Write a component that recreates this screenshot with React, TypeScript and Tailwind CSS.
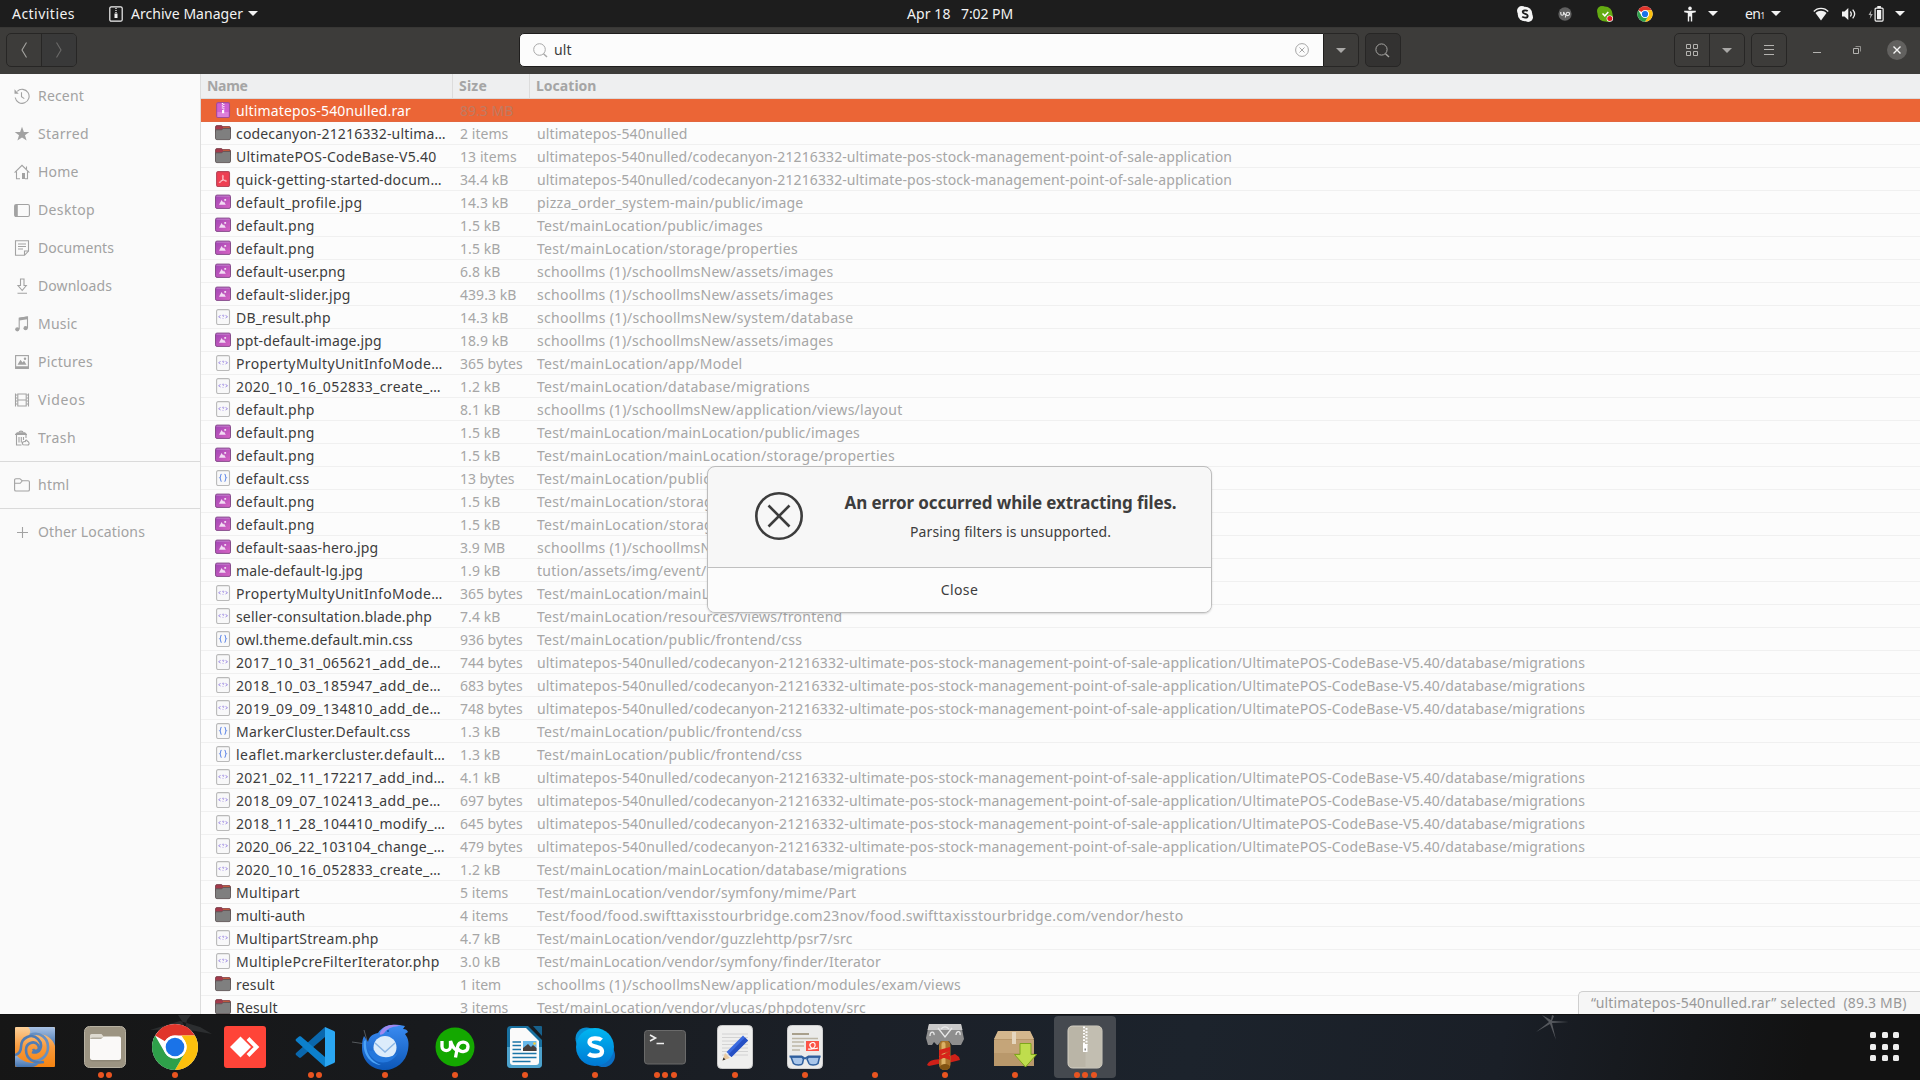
import React, { useLayoutEffect, useRef } from "react";

/** Text run whose tracking is adjusted so that it fills the given width. */
function Fit({ t, w, className = "" }: { t: string; w: number; className?: string }) {
  const ref = useRef<HTMLSpanElement>(null);
  useLayoutEffect(() => {
    const el = ref.current;
    if (!el) return;
    el.style.letterSpacing = "0px";
    const natural = el.getBoundingClientRect().width;
    el.style.letterSpacing = `${(w - natural) / t.length}px`;
  }, [t, w]);
  return (
    <span ref={ref} className={"inline-block shrink-0 whitespace-pre " + className}>
      {t}
    </span>
  );
}

type Kind = "rar" | "dir" | "pdf" | "img" | "php" | "css";
type Row = [Kind, string, number, string, string, number];

const APP = "ultimatepos-540nulled/codecanyon-21216332-ultimate-pos-stock-management-point-of-sale-application";
const MIG = APP + "/UltimatePOS-CodeBase-V5.40/database/migrations";
const ASSETS = "schoollms (1)/schoollmsNew/assets/images";
const FCSS = "Test/mainLocation/public/frontend/css";
const STORE = "Test/mainLocation/storage/properties";

const rows: Row[] = [
  ["rar", "ultimatepos-540nulled.rar", 175, "89.3 MB", "", 0],
  ["dir", "codecanyon-21216332-ultima…", 209.7, "2 items", "ultimatepos-540nulled", 150.5],
  ["dir", "UltimatePOS-CodeBase-V5.40", 200.5, "13 items", APP, 695],
  ["pdf", "quick-getting-started-docum…", 205.7, "34.4 kB", APP, 695],
  ["img", "default_profile.jpg", 126.5, "14.3 kB", "pizza_order_system-main/public/image", 266.5],
  ["img", "default.png", 78.6, "1.5 kB", "Test/mainLocation/public/images", 226],
  ["img", "default.png", 78.6, "1.5 kB", STORE, 261],
  ["img", "default-user.png", 109.6, "6.8 kB", ASSETS, 296.5],
  ["img", "default-slider.jpg", 114.7, "439.3 kB", ASSETS, 296.5],
  ["php", "DB_result.php", 94.7, "14.3 kB", "schoollms (1)/schoollmsNew/system/database", 316.5],
  ["img", "ppt-default-image.jpg", 145.6, "18.9 kB", ASSETS, 296.5],
  ["php", "PropertyMultyUnitInfoMode…", 206.7, "365 bytes", "Test/mainLocation/app/Model", 205.5],
  ["php", "2020_10_16_052833_create_…", 205, "1.2 kB", "Test/mainLocation/database/migrations", 273],
  ["php", "default.php", 78.6, "8.1 kB", "schoollms (1)/schoollmsNew/application/views/layout", 365.5],
  ["img", "default.png", 78.6, "1.5 kB", "Test/mainLocation/mainLocation/public/images", 323],
  ["img", "default.png", 78.6, "1.5 kB", "Test/mainLocation/mainLocation/storage/properties", 358],
  ["css", "default.css", 73.6, "13 bytes", FCSS, 265.3],
  ["img", "default.png", 78.6, "1.5 kB", STORE, 261],
  ["img", "default.png", 78.6, "1.5 kB", STORE, 261],
  ["img", "default-saas-hero.jpg", 142.3, "3.9 MB", ASSETS, 296.5],
  ["img", "male-default-lg.jpg", 127, "1.9 kB", "tution/assets/img/event/", 169.5],
  ["php", "PropertyMultyUnitInfoMode…", 206.7, "365 bytes", "Test/mainLocation/mainLocation/app/Model", 302],
  ["php", "seller-consultation.blade.php", 196, "7.4 kB", "Test/mainLocation/resources/views/frontend", 305.5],
  ["css", "owl.theme.default.min.css", 177, "936 bytes", FCSS, 265.3],
  ["php", "2017_10_31_065621_add_de…", 205, "744 bytes", MIG, 1048],
  ["php", "2018_10_03_185947_add_de…", 205, "683 bytes", MIG, 1048],
  ["php", "2019_09_09_134810_add_de…", 205, "748 bytes", MIG, 1048],
  ["css", "MarkerCluster.Default.css", 174.5, "1.3 kB", FCSS, 265.3],
  ["css", "leaflet.markercluster.default…", 209.3, "1.3 kB", FCSS, 265.3],
  ["php", "2021_02_11_172217_add_ind…", 209, "4.1 kB", MIG, 1048],
  ["php", "2018_09_07_102413_add_pe…", 204.7, "697 bytes", MIG, 1048],
  ["php", "2018_11_28_104410_modify_…", 209.3, "645 bytes", MIG, 1048],
  ["php", "2020_06_22_103104_change_…", 208.7, "479 bytes", MIG, 1048],
  ["php", "2020_10_16_052833_create_…", 205, "1.2 kB", "Test/mainLocation/mainLocation/database/migrations", 370],
  ["dir", "Multipart", 64, "5 items", "Test/mainLocation/vendor/symfony/mime/Part", 319.3],
  ["dir", "multi-auth", 69.3, "4 items", "Test/food/food.swifttaxisstourbridge.com23nov/food.swifttaxisstourbridge.com/vendor/hesto", 646.5],
  ["php", "MultipartStream.php", 142.7, "4.7 kB", "Test/mainLocation/vendor/guzzlehttp/psr7/src", 315.6],
  ["php", "MultiplePcreFilterIterator.php", 203.7, "3.0 kB", "Test/mainLocation/vendor/symfony/finder/Iterator", 344],
  ["dir", "result", 38.7, "1 item", "schoollms (1)/schoollmsNew/application/modules/exam/views", 424],
  ["dir", "Result", 41.7, "3 items", "Test/mainLocation/vendor/vlucas/phpdotenv/src", 329],
];

function sizeWidth(s: string) {
  if (s === "89.3 MB") return 53.4;
  if (s === "439.3 kB") return 56.4;
  if (s === "3.9 MB") return 45.2;
  if (s === "13 bytes") return 54.5;
  if (s === "13 items") return 56.7;
  if (s === "1 item") return 41.2;
  if (s.endsWith("bytes")) return 62.7;
  if (s.endsWith("items")) return 48.3;
  return s.length === 7 ? 48.3 : 40.4;
}

function FileIcon({ k }: { k: Kind }) {
  const base = "block h-4 w-4 shrink-0";
  if (k === "dir")
    return (
      <svg className={base} viewBox="0 0 16 16">
        <path d="M.5 3V2A1.5 1.5 0 0 1 2 .6h4.5l1.3 1H14A1.5 1.5 0 0 1 15.5 3v4H.5z" fill="#a33a4b" stroke="#6e3a42" strokeWidth=".8" />
        <path d="M8 1.8h6.2l.8 1.4H8z" fill="#c75a3c" />
        <path d="M.5 4.8h6.3L8.2 3.4h7.3v9.8a1.4 1.4 0 0 1-1.4 1.4H1.9A1.4 1.4 0 0 1 .5 13.2z" fill="#7f7f7f" stroke="#5d5556" strokeWidth=".9" />
      </svg>
    );
  if (k === "img")
    return (
      <svg className={base} viewBox="0 0 16 16">
        <defs>
          <linearGradient id="imgG" x1="0" y1="0" x2="1" y2="1">
            <stop offset="0" stopColor="#9f45b5" />
            <stop offset="1" stopColor="#d964c4" />
          </linearGradient>
        </defs>
        <rect x=".5" y="1.1" width="15" height="13.3" rx="1.5" fill="url(#imgG)" stroke="#874f8c" strokeWidth="1" />
        <path d="M1.5 2.2h13" stroke="#c58bd0" strokeWidth=".8" />
        <path d="M4 10.7 6.6 6l1.6 2.6.8-1 1.8 3.1z" fill="#f2dcf3" />
        <rect x="9.3" y="5" width="1.8" height="1.8" fill="#f2dcf3" />
      </svg>
    );
  const paper = k === "php" || k === "css";
  return (
    <svg className={base} viewBox="0 0 16 16">
      <rect
        x="1.6" y=".6" width="12.9" height="14.9" rx="1.5"
        fill={paper ? "#f8f8f9" : k === "pdf" ? "#ee3e52" : "#d05fd0"}
        stroke={paper ? "#b9b9b9" : k === "pdf" ? "#b5475a" : "#a34d96"}
        strokeWidth="1.1"
      />
      {k === "rar" && (
        <>
          <path d="M2.5 10h11v5h-11z" fill="#dc80d9" />
          <path d="M7.4 1v6.5M8.8 1.8v6" stroke="#fff" strokeWidth="1.2" strokeDasharray="1.2 1" />
          <path d="M7 8h2.2v3.2H7z" fill="#fff" />
        </>
      )}
      {k === "pdf" && (
        <path d="M7.8 4.2c.9 0 .5 2 .2 3C7.2 9.7 5.3 12 4.4 11.6c-.8-.7 2.1-2.1 4-2.3 1.4-.2 3.2.1 3.1.8-.2.9-2.9-.6-3.6-2.5-.5-1.300-.8-3.300-.1-3.400z" fill="none" stroke="#fbd5d9" strokeWidth=".8" />
      )}
      {k === "php" && (
        <path d="M5.6 6.4 3.6 7.7l2 1.3M10.500 6.400l2 1.300-2 1.300M7.200 6.600c.3-.7 1.900-.6 1.700.3-.1.6-.9.600-.9 1.200M8 9.100v.7" fill="none" stroke="#a593e6" strokeWidth="1" />
      )}
      {k === "css" && (
        <path d="M6.7 4.2c-1.800 0-.7 2.700-1.500 3.300l-.5.3.5.3c.8.600-.3 3.300 1.500 3.300M9.400 4.200c1.800 0 .7 2.700 1.500 3.300l.5.3-.5.3c-.8.600.3 3.300-1.500 3.300" fill="none" stroke="#6a8fe8" strokeWidth="1.1" />
      )}
    </svg>
  );
}

function Caret({ className = "" }: { className?: string }) {
  return (
    <svg className={"block h-[5px] w-[10px] shrink-0 " + className} viewBox="0 0 10 5">
      <path d="M0 0h10L5 5z" fill="currentColor" />
    </svg>
  );
}

function ChromeLogo({ className }: { className: string }) {
  return (
    <svg className={className} viewBox="0 0 48 48">
      <circle cx="24" cy="24" r="23" fill="#fff" />
      <path d="M24 1a23 23 0 0 1 19.9 11.5H24A11.5 11.5 0 0 0 14 18.2L4.1 12.5A23 23 0 0 1 24 1z" fill="#e0352b" />
      <path d="M4.1 12.5 14 29.8a11.5 11.5 0 0 0 10 5.7L24 47A23 23 0 0 1 4.1 12.5z" fill="#2ea04a" />
      <path d="M24 47l10-17.2a11.5 11.5 0 0 0 0-11.6L30.5 12.5H43.9A23 23 0 0 1 24 47z" fill="#fcc00d" />
      <path d="M24 47l10-17.2a11.5 11.5 0 0 1-10 5.7 11.5 11.5 0 0 1-10-5.7L15 31.5 24 40z" fill="#2ea04a" />
      <circle cx="24" cy="24" r="11.5" fill="#fff" />
      <circle cx="24" cy="24" r="9.3" fill="#1a73e8" />
    </svg>
  );
}

const sideIcons: Record<string, React.ReactNode> = {
  Recent: (
    <>
      <path d="M3.2 3.3A7 7 0 1 1 1.2 9.5" />
      <path d="M7.5 4.3v4.5l2.8 1.8" />
      <path d="M.5 1.3v4.4h4.2z" fill="currentColor" stroke="none" />
    </>
  ),
  Starred: <path d="M8 .8 9.9 6H15.3l-4.3 3.3 1.6 5.3L8 11.4l-4.6 3.2L5 9.3.7 6h5.4z" fill="currentColor" stroke="none" />,
  Home: (
    <>
      <path d="M.6 8.7 8 1.3l7.4 7.4M2.5 7.5v7.2h3.5M11 14.7h2.5V7.5M12.5 2.5v2.5" />
      <path d="M8 9h3v6H8z" fill="currentColor" stroke="none" />
    </>
  ),
  Desktop: (
    <>
      <rect x=".6" y="2.5" width="14.8" height="12" rx="1.5" />
      <path d="M1 3h2.800v11H1z" fill="currentColor" stroke="none" />
    </>
  ),
  Documents: (
    <>
      <path d="M1.5.7h13V11l-4 4.3h-9z" />
      <path d="M4 4h8M4 6.5h8M4 9h5M10.5 15v-4h4" />
    </>
  ),
  Downloads: <path d="M6.5 1h3.5v6.5h2.3L8.2 12.5 4 7.5h2.5zM3.5 15.3h9.5" />,
  Music: (
    <>
      <path d="M5.2 13V2.2l8.300-1.200v11" />
      <path d="M5.2 1.800 13.5.6v2.600l-8.300 1.200z" fill="currentColor" stroke="none" />
      <circle cx="3.3" cy="13.3" r="2.1" fill="currentColor" stroke="none" />
      <circle cx="11.6" cy="12.2" r="2.1" fill="currentColor" stroke="none" />
    </>
  ),
  Pictures: (
    <>
      <rect x="1.6" y="1.6" width="12.8" height="12.8" />
      <path d="M1.6 12.2h12.800v2.200H1.600zM3.500 10.800l3-5 2 2.800 1.500-1.800 2.500 4z" fill="currentColor" stroke="none" />
      <circle cx="11" cy="4.8" r="1.2" fill="currentColor" stroke="none" />
    </>
  ),
  Videos: (
    <>
      <path d="M1.5 1.5v13M3.8 1.5v13M12.2 1.5v13M14.5 1.5v13M3.8 2h8.4M3.8 8h8.4M3.8 14h8.4" />
      <path d="M1.5 3h2M1.5 6h2M1.5 9h2M1.5 12h2M12.5 3h2M12.5 6h2M12.5 9h2M12.5 12h2" />
    </>
  ),
  Trash: (
    <>
      <path d="M5 2.5c0-1.800 4-1.800 4 0" />
      <path d="M1 4.2 3 2.3h8l2 1.900v.9H1z" fill="currentColor" stroke="none" />
      <path d="M2.5 5v10h5M5 7v5.500M7.300 7v5.500M9.500 7v3M12 5v3" />
      <path d="M9 14.8c-2-2.800 1-3.500 2.300-3.300 0-1.500 1.800-2 2-.2 2 .2 2.500 3.500.5 3.700z" />
    </>
  ),
  html: <path d="M.6 12.7V3A1.3 1.3 0 0 1 1.9 1.7h4l2.200 2h6A1.3 1.3 0 0 1 15.4 5v7.700a1.3 1.3 0 0 1-1.300 1.300H1.900A1.3 1.3 0 0 1 .6 12.700zM.6 6.300h5.600L8.200 4" />,
  "Other Locations": <path d="M8.500 3v11M3 8.500h11" />,
};

function SideItem({ t, w }: { t: string; w: number }) {
  return (
    <div className="flex h-[38px] shrink-0 items-center pl-[14px] text-[#a2a2a2]">
      <svg className="mr-2 block h-4 w-4" viewBox="0 0 16 16" fill="none" stroke="currentColor" strokeWidth="1.1">
        {sideIcons[t]}
      </svg>
      <Fit t={t} w={w} className="text-[14px]" />
    </div>
  );
}

const dockIcons: { icon: React.ReactNode; dots: number; active?: boolean }[] = [
  {
    dots: 0,
    icon: (
      <svg className="h-10 w-10" viewBox="0 0 40 40">
        <defs>
          <linearGradient id="sw" x1="0" y1="0" x2="0" y2="1">
            <stop offset="0" stopColor="#fbd09a" />
            <stop offset=".5" stopColor="#f89a3c" />
            <stop offset="1" stopColor="#f68411" />
          </linearGradient>
          <linearGradient id="swb" x1="0" y1="0" x2="0" y2="1">
            <stop offset="0" stopColor="#a9c3e6" />
            <stop offset="1" stopColor="#4474b0" />
          </linearGradient>
        </defs>
        <rect width="40" height="40" rx="1" fill="url(#sw)" />
        <path d="M13 0h25a2 2 0 0 1 2 2v17C37 9 26 4 13 9c4-3 2-7 0-9z" fill="url(#swb)" />
        <path d="M0 26c5 8 15 12 25 9-2 3-5 5-9 5H2a2 2 0 0 1-2-2z" fill="url(#swb)" />
        <path d="M15 8c10-4 18 3 18 12 0 8-6 14-14 14" fill="none" stroke="#6690c3" strokeWidth="2.6" />
        <path d="M0 28c4-1 6-3 6-8C6 10 17 6 23 12s2 16-6 13" fill="none" stroke="#4f7cb5" strokeWidth="2.600" />
        <path d="M29 35c-10 2-18-3-18-12 0-7 8-10 12-5 3 5-3 8-5 4" fill="none" stroke="#4f7cb5" strokeWidth="2.600" />
      </svg>
    ),
  },
  {
    dots: 2,
    icon: (
      <svg className="h-[42px] w-[42px]" viewBox="0 0 42 42">
        <rect x=".5" y=".5" width="41" height="41" rx="5" fill="#9c9482" stroke="#b7b1a2" />
        <path d="M6 11V9.500A1.500 1.500 0 0 1 7.500 8h10l2.500 3h14v5H6z" fill="#dedad0" />
        <rect x="6" y="11.5" width="31" height="24" rx="2.5" fill="#7d7666" opacity=".45" />
        <path d="M6 13h11l3-2.500h15a2 2 0 0 1 2 2V32a2 2 0 0 1-2 2H8a2 2 0 0 1-2-2z" fill="#faf9f8" />
      </svg>
    ),
  },
  { dots: 1, icon: <ChromeLogo className="h-12 w-12" /> },
  {
    dots: 0,
    icon: (
      <svg className="h-[42px] w-[42px]" viewBox="0 0 42 42">
        <rect width="42" height="42" rx="3" fill="#ff4438" />
        <path d="M6 21 16.500 10.500 27 21 16.500 31.500z" fill="#fff" />
        <path d="m24 12.500 8.500 8.500-8.500 8.500" fill="none" stroke="#fff" strokeWidth="4" />
      </svg>
    ),
  },
  {
    dots: 2,
    icon: (
      <svg className="h-10 w-10" viewBox="0 0 40 40">
        <path d="M30 0 1 26a1.500 1.500 0 0 0 0 2l3 2.500c.6.500 1.300.5 2 0L30 10z" fill="#0a67ad" />
        <path d="M30 40 1 14a1.500 1.500 0 0 1 0-2L4 9.500c.6-.5 1.300-.5 2 0L30 30z" fill="#0c80cc" />
        <path d="M30 0l9 4a2 2 0 0 1 1 2v28a2 2 0 0 1-1 2l-9 4z" fill="#2aa6f2" />
      </svg>
    ),
  },
  {
    dots: 1,
    icon: (
      <svg className="h-12 w-12" viewBox="0 0 48 48">
        <defs>
          <linearGradient id="tb" x1="0" y1="0" x2="0" y2="1">
            <stop offset="0" stopColor="#3b8cf2" />
            <stop offset="1" stopColor="#0c57b8" />
          </linearGradient>
        </defs>
        <path d="M17 10C22 2 31 0 44 3l-2 3c3 0 4 1 5 3l-3 2c4 5 4 10 3 16-2 12-12 20-23 20C10 47 1 37 1 25c0-4 0-8 2-12l4 6c1-5 4-8 10-9z" fill="url(#tb)" />
        <path d="M19 10C22 2 31 0 40 3c-7 0-13 2-16 6-2 3-6 4-5 1z" fill="#a088ee" />
        <path d="M5 17c-1 12 4 21 15 25-12-1-19-13-17-24z" fill="#4ca4f8" />
        <circle cx="24" cy="24.500" r="11.500" fill="#dcecfb" />
        <path d="m14 20 10 9 10-9" fill="none" stroke="#8bb6e4" strokeWidth="1.500" />
        <path d="M7 27c4 15 22 17 30 3-8 6-20 6-24-3-2 1-4 1-6 0z" fill="#2478dd" />
        <circle cx="27" cy="8" r="1" fill="#0a4fa8" />
      </svg>
    ),
  },
  {
    dots: 1,
    icon: (
      <svg className="h-10 w-10" viewBox="0 0 40 40">
        <circle cx="20" cy="20" r="19.5" fill="#14a800" />
        <path d="M7 14v5.500c0 5.500 8.500 5.500 8.500 0V14c1.500 5 4 9 8 10" fill="none" stroke="#fff" strokeWidth="3.3" />
        <path d="M20.500 30.500 22.500 20c1.500-7 10.500-6 10.500-.5s-7 7-10.500 2" fill="none" stroke="#fff" strokeWidth="3.3" />
      </svg>
    ),
  },
  {
    dots: 1,
    icon: (
      <svg className="h-[44px] w-[36px]" viewBox="0 0 36 44">
        <path d="M4 1h17l14 14v24a4 4 0 0 1-4 4H4a4 4 0 0 1-4-4V5a4 4 0 0 1 4-4z" fill="#18709f" />
        <path d="M26 1h8a1 1 0 0 1 1 1v9z" fill="#17618c" />
        <path d="M0 22h35v17a4 4 0 0 1-4 4H4a4 4 0 0 1-4-4z" fill="#4da2cc" />
        <path d="M5 3h14l13 13v21a3 3 0 0 1-3 3H6a3 3 0 0 1-3-3V5a2 2 0 0 1 2-2z" fill="#fafafa" />
        <path d="M5.500 17H14M5.500 20.500H14M5.500 24.500H14M5.500 28.500h24M5.500 32.500h24M5.500 36.500h18" stroke="#1b75a8" strokeWidth="1.7" />
        <rect x="16" y="16" width="13.5" height="10" fill="#66b8ea" />
        <path d="M16 26v-3l5-4 3 3 2-2 3.500 3v3z" fill="#463e3b" />
        <circle cx="27.5" cy="18.5" r="1.3" fill="#f5cb35" />
      </svg>
    ),
  },
  {
    dots: 1,
    icon: (
      <svg className="h-10 w-10" viewBox="0 0 40 40">
        <defs>
          <linearGradient id="sk" x1="0" y1="0" x2="0" y2="1">
            <stop offset="0" stopColor="#00b7f1" />
            <stop offset="1" stopColor="#0078d4" />
          </linearGradient>
        </defs>
        <circle cx="11.5" cy="11.5" r="11" fill="#0791d6" />
        <circle cx="28.5" cy="28.5" r="11.5" fill="#0b6fc4" />
        <circle cx="20" cy="20" r="19" fill="url(#sk)" />
        <path d="M26.500 13c-2.500-2.200-12-3-12 2.200 0 5.800 12.500 2.800 12.500 9.300 0 5.500-10.500 5-13.500 2.200" fill="none" stroke="#fff" strokeWidth="4.3" />
      </svg>
    ),
  },
  {
    dots: 3,
    icon: (
      <svg className="h-[42px] w-[42px]" viewBox="0 0 42 42">
        <rect x=".5" y="4.5" width="41" height="33.5" rx="3" fill="#4d4d4d" stroke="#6a6a6a" />
        <path d="m6 9 5.500 3L6 15M12.500 17.500H20" fill="none" stroke="#efefef" strokeWidth="1.6" />
      </svg>
    ),
  },
  {
    dots: 1,
    icon: (
      <svg className="h-[44px] w-[36px]" viewBox="0 0 36 44">
        <rect x=".5" y=".5" width="35" height="43" rx="4" fill="#efefee" stroke="#c9c9c9" />
        <path d="M5 9h26M5 12.500h26M5 16h26M5 19.500h26M5 23h26M5 26.500h26M5 30h26" stroke="#cfcfcf" strokeWidth=".9" />
        <path d="M5.500 35.500 8 28l5 5z" fill="#e8c9a0" />
        <path d="m5.500 35.500 1-3 2 2z" fill="#333" />
        <path d="M9.500 27 26 10.500l5 5L14.500 32z" fill="#3a6ae0" />
        <path d="m11.500 29.500 16.500-17 3 3L14.500 32z" fill="#2650c4" />
      </svg>
    ),
  },
  {
    dots: 1,
    icon: (
      <svg className="h-[44px] w-[36px]" viewBox="0 0 36 44">
        <rect x=".5" y=".5" width="35" height="43" rx="4" fill="#ebebea" stroke="#cfcfcf" />
        <path d="M5 9h17" stroke="#a9a08c" strokeWidth="2" />
        <path d="M5 13.500h26M5 17h12M5 21h12M5 25h8" stroke="#bdb6a6" strokeWidth="1.6" />
        <rect x="19" y="16" width="13" height="10" fill="#fb5246" />
        <path d="M21 24c5 1 8-2 7-5s-6-1-5 2 5 3 8 2" fill="none" stroke="#fff" strokeWidth="1.2" />
        <path d="M4 32h11l1.500 2-1 4.500c-1 2-7 2-9 0zM20 34l1.500-2h11L31 38.500c-2 2-8 2-9 0z" fill="#a9c6ea" stroke="#2f5f9e" strokeWidth="1.5" />
        <path d="M2.500 31.500h12l3.500 2 3.500-2h12" fill="none" stroke="#2f5f9e" strokeWidth="1.8" />
      </svg>
    ),
  },
  { dots: 1, icon: null },
  {
    dots: 1,
    icon: (
      <svg className="h-[46px] w-10" viewBox="0 0 40 46">
        <path d="M2 41c3-6 7-5 14-6l2 4-14 3zM22 33l8-3 4 3 1 3-12 3z" fill="#cf2018" />
        <rect x="14" y="16" width="11.5" height="30" rx="5.5" fill="#a9742c" />
        <rect x="16.5" y="18" width="4" height="26" rx="2" fill="#ddb165" />
        <ellipse cx="20" cy="43" rx="5" ry="3" fill="#815312" />
        <path d="m14 26 11-3v4l-11 4zM14 33l11-6v4l-11 5zM14 30l11 2v4l-11-4z" fill="#d8231a" />
        <path d="M4 0h32l3 15-3 6h-9l-3-4h-8l-3 4h-1l-3-3-2 3H3l-2-7z" fill="#8e8e8e" />
        <path d="M4 0h32l1.500 6H2.500z" fill="#c9c9c9" />
        <path d="m13 4 7 9 7-9M16 5c3-3 5-3 8 0M5 12c0-6 5-4 4-1M31 11c0-4 5-5 4 0" fill="none" stroke="#e8e8e8" strokeWidth="1.3" />
      </svg>
    ),
  },
  {
    dots: 1,
    icon: (
      <svg className="h-10 w-[44px]" viewBox="0 0 44 40">
        <path d="M5 4h32l4 9v26H1V13z" fill="#b9986b" />
        <path d="M5 4h32l4 8H1z" fill="#d4b78d" />
        <path d="M1 13h40v13H1z" fill="#c5a579" />
        <path d="M19 5h4v12h-4z" fill="#e5d6be" />
        <path d="M27 16.500h11v11h5.500L32.500 40 21.500 27.500H27z" fill="#bfdd4d" stroke="#7fa61c" />
      </svg>
    ),
  },
  {
    dots: 3,
    active: true,
    icon: (
      <svg className="h-[44px] w-[36px]" viewBox="0 0 36 44">
        <rect x="1" y="1" width="34" height="42" rx="4.5" fill="#bab5a7" stroke="#d4d0c4" />
        <path d="M18.500 1.500H30a4.500 4.500 0 0 1 4.500 4.500v32a4.500 4.500 0 0 1-4.500 4.500H18.500z" fill="#c2beb1" />
        <path d="M17 1.500v18M19.500 3v17" stroke="#fff" strokeWidth="2" strokeDasharray="1.7 1.5" />
        <path d="M16 19h4.500v8H16z" fill="#fff" />
        <path d="M17.500 23.500h1.500v2h-1.500z" fill="#888" />
      </svg>
    ),
  },
];

export default function App() {
  return (
    <div className="relative flex h-[1080px] w-[1920px] flex-col overflow-hidden bg-[#fcfcfc] font-['Noto_Sans','Open_Sans',sans-serif] text-[14px] leading-[20px] text-[#3d3d3d]">
      {/* system bar */}
      <div className="flex h-[27px] shrink-0 items-center justify-between bg-[#1d1d1d] text-[#f2f2f2]">
        <div className="flex w-[600px] items-center pl-3">
          <Fit t="Activities" w={63} />
          <svg className="ml-[34px] mr-2 block h-4 w-[14px]" viewBox="0 0 14 16">
            <rect x=".8" y=".8" width="12.4" height="14.4" rx="1.5" fill="none" stroke="#f2f2f2" strokeWidth="1.2" />
            <path d="M7 2v5" stroke="#f2f2f2" strokeWidth="1.3" strokeDasharray="1 1" />
            <path d="M5.500 7.500h3V12h-3z" fill="#f2f2f2" />
          </svg>
          <Fit t="Archive Manager" w={112} />
          <Caret className="ml-[5px]" />
        </div>
        <div className="flex w-[106px] justify-between">
          <Fit t="Apr 18" w={43.5} />
          <Fit t="7:02 PM" w={52} />
        </div>
        <div className="flex w-[600px] items-center justify-end pr-[15px]">
          <div className="mr-[17px] flex">
            <div className="flex w-10 justify-center">
              <svg className="h-4 w-4" viewBox="0 0 16 16">
                <circle cx="4.8" cy="4.8" r="4.8" fill="#f5f5f5" />
                <circle cx="11.2" cy="11.2" r="4.8" fill="#f5f5f5" />
                <circle cx="8" cy="8" r="7.3" fill="#f5f5f5" />
                <path d="M10.700 5.200c-1.100-1-5-1.200-5 .9 0 2.400 5 1.200 5 3.800 0 2.300-4.200 2-5.500.8" fill="none" stroke="#1d1d1d" strokeWidth="1.8" />
              </svg>
            </div>
            <div className="flex w-10 items-center justify-center">
              <svg className="h-[14px] w-[14px]" viewBox="0 0 40 40">
                <circle cx="20" cy="20" r="19" fill="#606060" />
                <path d="M8 14v5c0 6 8 6 8 0v-5c1.500 5 4 9 8 10M21 30l2-10c1.500-7 10-6 10-.5s-7 7-10 2" fill="none" stroke="#e8e8e8" strokeWidth="3.2" />
              </svg>
            </div>
            <div className="flex w-10 justify-center">
              <svg className="h-4 w-4" viewBox="0 0 16 16">
                <circle cx="5" cy="5" r="5" fill="#64ab12" />
                <circle cx="11" cy="11" r="5" fill="#64ab12" />
                <circle cx="8" cy="8" r="7.5" fill="#64ab12" />
                <path d="m5.500 7.500 2.300 2.300 3.500-3.800" fill="none" stroke="#fff" strokeWidth="1.5" />
                <circle cx="12.8" cy="12.6" r="3.2" fill="#fff" />
                <circle cx="12.8" cy="12.6" r="2.5" fill="#e01b24" />
              </svg>
            </div>
            <div className="flex w-10 justify-center">
              <ChromeLogo className="h-4 w-4" />
            </div>
          </div>
          <svg className="mr-[10px] h-4 w-4" viewBox="0 0 16 16">
            <circle cx="8" cy="2.4" r="1.8" fill="#f2f2f2" />
            <path d="M2.200 4.800h11.600v1.400l-3.600.7V15.500H8.800V10.500H7.200v5H5.800V6.900l-3.600-.7z" fill="#f2f2f2" />
          </svg>
          <Caret />
          <div className="ml-[27px] mr-[6px] flex w-5 items-baseline">
            <Fit t="en" w={15.5} />
            <span className="text-[8px] leading-none">1</span>
          </div>
          <Caret />
          <svg className="ml-8 h-4 w-4" viewBox="0 0 16 16">
            <path d="M.8 5.500C4.500 1.200 11.500 1.200 15.200 5.500" fill="none" stroke="#f2f2f2" strokeWidth="1.3" />
            <path d="M2.500 7C5.500 4 10.500 4 13.500 7L8 14.500z" fill="#f2f2f2" />
          </svg>
          <svg className="ml-3 h-4 w-4" viewBox="0 0 16 16">
            <path d="M1 5.500h2.500L7.300 2v12L3.500 10.500H1z" fill="#f2f2f2" />
            <path d="M9.300 5.500c1.200 1.500 1.200 3.500 0 5M11.700 3.600c2.300 2.600 2.300 6.200 0 8.800" fill="none" stroke="#f2f2f2" strokeWidth="1.3" />
          </svg>
          <svg className="ml-[11px] h-4 w-4" viewBox="0 0 16 16">
            <path d="m3.500 4-3 5h2l-.7 4 3-5h-2z" fill="#aaa" />
            <rect x="7.1" y="2.1" width="8" height="13" rx="1" fill="none" stroke="#f2f2f2" strokeWidth="1.2" />
            <path d="M9.300 0h3.600v2H9.300zM9 4h4.200v9.300H9z" fill="#f2f2f2" />
          </svg>
          <Caret className="ml-[11px]" />
        </div>
      </div>

      {/* window header */}
      <div className="flex h-[47px] shrink-0 items-center border-t border-[#383735] bg-[#3d3c3a] px-1.5 pb-[2px] text-[#a9a8a6]">
        <div className="flex h-[34px] w-[71px] rounded-[5px] border border-[#272625]">
          <div className="flex w-[35px] items-center justify-center border-r border-[#272625]">
            <svg className="h-4 w-[6px]" viewBox="0 0 6 16" fill="none" stroke="#a5a4a1">
              <path d="M5.500.5 1 8l4.500 7.500" strokeWidth="1.1" />
            </svg>
          </div>
          <div className="flex flex-1 items-center justify-center rounded-r-[4px] bg-[#393939]">
            <svg className="h-4 w-[6px]" viewBox="0 0 6 16" fill="none" stroke="#6b6a69">
              <path d="M.5.5 5 8 .5 15.500" strokeWidth="1.1" />
            </svg>
          </div>
        </div>
        <div className="ml-[442px] flex h-[34px] w-[805px] items-center rounded-l-[5px] border border-[#1f1e1d] bg-[#fcfcfc] pl-[13px] pr-[14px]">
          <svg className="mr-[6px] h-[15px] w-[15px]" viewBox="0 0 15 15" fill="none" stroke="#a8a8a8">
            <circle cx="6.5" cy="6.5" r="5.8" />
            <path d="m10.500 10.700 3.500 3.300" strokeWidth="1.5" />
          </svg>
          <Fit t="ult" w={17.8} className="text-[#3d3d3d]" />
          <div className="flex-1" />
          <svg className="h-[14px] w-[14px]" viewBox="0 0 14 14" fill="none" stroke="#a5a5a5">
            <circle cx="7" cy="7" r="6.4" />
            <path d="m4.500 4.500 5 5M9.500 4.500l-5 5" />
          </svg>
        </div>
        <div className="flex h-[34px] w-[35px] items-center justify-center rounded-r-[5px] border border-l-0 border-[#272625]">
          <Caret />
        </div>
        <div className="ml-1.5 flex h-[34px] w-[36px] items-center justify-center rounded-[5px] border border-[#272625] bg-[#333231]">
          <svg className="-ml-px h-[15px] w-[15px]" viewBox="0 0 15 15" fill="none" stroke="#a5a4a1">
            <circle cx="6.5" cy="6.5" r="5.6" />
            <path d="m10.500 10.700 3.500 3.300" strokeWidth="1.4" />
          </svg>
        </div>
        <div className="ml-[273px] flex h-[34px] w-[71px] rounded-[5px] border border-[#272625]">
          <div className="flex w-[35px] items-center justify-center border-r border-[#272625]">
            <svg className="h-[12px] w-[12px]" viewBox="0 0 12 12" fill="none" stroke="#b4b3b0">
              <path d="M.5.5h4v4h-4zM7.500.5h4v4h-4zM.5 7.500h4v4h-4zM7.500 7.500h4v4h-4z" />
            </svg>
          </div>
          <div className="flex flex-1 items-center justify-center">
            <Caret />
          </div>
        </div>
        <div className="ml-1.5 flex h-[34px] w-[36px] items-center justify-center rounded-[5px] border border-[#272625]">
          <svg className="h-[10px] w-[10px]" viewBox="0 0 10 10" stroke="#b4b3b0">
            <path d="M0 .5h10M0 4.500h10M0 9.500h10" />
          </svg>
        </div>
        <div className="ml-[26px] mt-1 h-px w-2 bg-[#b4b3b0]" />
        <svg className="ml-8 h-2 w-2" viewBox="0 0 8 8" fill="none" stroke="#b4b3b0">
          <path d="M.5 2.500h5v5h-5z" />
          <path d="M2.500.5h5v5" strokeWidth=".7" />
        </svg>
        <div className="ml-[26px] flex h-5 w-5 items-center justify-center rounded-full bg-[#62615f]">
          <svg className="h-2 w-2" viewBox="0 0 8 8" stroke="#f5f5f5" strokeWidth="1.4">
            <path d="m.5.5 7 7M7.500.5l-7 7" />
          </svg>
        </div>
      </div>

      <div className="flex h-[940px] shrink-0 overflow-hidden">
        {/* places */}
        <div className="flex w-[201px] shrink-0 flex-col border-r border-[#dcdcdc] bg-[#fafafa] pt-[3px]">
          <SideItem t="Recent" w={46} />
          <SideItem t="Starred" w={51} />
          <SideItem t="Home" w={40.5} />
          <SideItem t="Desktop" w={57} />
          <SideItem t="Documents" w={76} />
          <SideItem t="Downloads" w={74} />
          <SideItem t="Music" w={39.5} />
          <SideItem t="Pictures" w={55} />
          <SideItem t="Videos" w={47.5} />
          <SideItem t="Trash" w={38} />
          <div className="mb-1 mt-1 h-px shrink-0 bg-[#dadada]" />
          <SideItem t="html" w={31.5} />
          <div className="mb-1 mt-1 h-px shrink-0 bg-[#dadada]" />
          <SideItem t="Other Locations" w={107} />
        </div>

        {/* file list */}
        <div className="flex flex-1 flex-col overflow-hidden">
          <div className="flex h-[25px] shrink-0 items-center border-b border-[#d9dadb] bg-[#eeeff0] font-bold text-[#a5a5a5]">
            <div className="flex h-full w-[252px] items-center border-r border-[#dcdcdc] pl-[6px]">
              <Fit t="Name" w={40.5} />
            </div>
            <div className="flex h-full w-[77px] items-center border-r border-[#dcdcdc] pl-[6px]">
              <Fit t="Size" w={28} />
            </div>
            <div className="flex h-full items-center pl-[6px]">
              <Fit t="Location" w={60.5} />
            </div>
          </div>
          {rows.map(([k, name, nw, size, loc, lw], i) => (
            <div
              key={i}
              className={
                "flex h-[23px] shrink-0 items-center border-b pl-[14px] " +
                (i === 0 ? "border-[#e3673f] bg-[#eb6536]" : "border-[#f0f0f0]")
              }
            >
              <FileIcon k={k} />
              <div className={"w-[224px] shrink-0 pl-[5px] pt-[2px] " + (i === 0 ? "text-white" : "text-[#3d3d3d]")}>
                <Fit t={name} w={nw} />
              </div>
              <div className={"w-[82px] shrink-0 pl-[5px] pt-[2px] " + (i === 0 ? "text-[#c07a61]" : "text-[#a6a6a6]")}>
                <Fit t={size} w={sizeWidth(size)} />
              </div>
              <div className="pt-[2px] text-[#a6a6a6]">{loc && <Fit t={loc} w={lw} />}</div>
            </div>
          ))}
        </div>
      </div>

      {/* selection status */}
      <div className="absolute left-[1578px] top-[991px] flex h-[23px] w-[342px] items-center rounded-tl-[5px] border-l border-t border-[#cfcfcf] bg-[#f6f6f6] pl-[12px] text-[#999]">
        <Fit t={"“ultimatepos-540nulled.rar” selected  (89.3 MB)"} w={315.5} />
      </div>

      {/* dock */}
      <div className="relative flex h-[66px] shrink-0 border-t border-[#111] bg-[linear-gradient(100deg,#161616_0%,#181a1d_22%,#1b2028_45%,#1c232c_62%,#1a1f27_78%,#121212_94%)]">
        <svg className="absolute left-0 top-0 h-[66px] w-[1920px]" viewBox="0 0 1920 66">
          <path d="M178 0l4 6 3 8 2-9 4-5zM150 15l30-9 20 6 12 7-28-5z" fill="#3a3d40" opacity=".6" />
          <path d="M352 27l14 2M364 15l5 18" stroke="#55595d" />
          <path d="M1552 6l17 1-17 1 4 17-6-16-14 8 13-10-7-7 9 5 1-5 2 1z" fill="#55585d" />
        </svg>
        {dockIcons.map((d, i) => (
          <div key={i} className="relative flex w-[70px] shrink-0 justify-center pt-px">
            <div className={"flex h-[62px] w-[62px] items-center justify-center rounded-[4px] " + (d.active ? "bg-[#45494f]" : "")}>
              {d.icon}
            </div>
            <div className="absolute bottom-[2px] left-0 flex w-full justify-center gap-[2.5px]">
              {Array.from({ length: d.dots }, (_, j) => (
                <span key={j} className="h-[6px] w-[6px] rounded-full bg-[#e95420]" />
              ))}
            </div>
          </div>
        ))}
        <div className="ml-auto mr-[21px] mt-[17px] flex h-[29px] w-[29px] flex-col justify-between">
          {[0, 1, 2].map((r) => (
            <div key={r} className="flex justify-between">
              {[0, 1, 2].map((c) => (
                <span key={c} className="h-[6px] w-[6px] rounded-[1.5px] bg-[#eee]" />
              ))}
            </div>
          ))}
        </div>
      </div>

      {/* error dialog */}
      <div className="absolute left-[707px] top-[466px] flex h-[147px] w-[505px] flex-col overflow-hidden rounded-[8px] border border-[#bdbdbd] bg-[#f7f7f7] shadow-[0_1px_2px_rgba(0,0,0,0.15)]">
        <div className="flex h-[101px] shrink-0 border-b border-[#c0c0c0] pl-[47px]">
          <svg className="mt-[25px] h-12 w-12 shrink-0" viewBox="0 0 48 48" fill="none" stroke="#3d3d3d">
            <circle cx="24" cy="24" r="22.7" strokeWidth="2.6" />
            <path d="m13.500 13.500 21 21M34.500 13.500l-21 21" strokeWidth="2.6" />
          </svg>
          <div className="flex flex-1 flex-col items-center pl-[7px] pt-[24px]">
            <Fit t="An error occurred while extracting files." w={332} className="text-[17px] leading-[24px] font-bold" />
            <Fit t="Parsing filters is unsupported." w={201} className="mt-[7px] leading-[20px]" />
          </div>
        </div>
        <div className="flex flex-1 items-center justify-center bg-[#fcfcfc]">
          <Fit t="Close" w={37.5} />
        </div>
      </div>
    </div>
  );
}
